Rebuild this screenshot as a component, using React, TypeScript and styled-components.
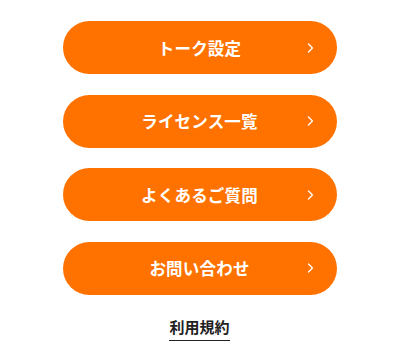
import styled, { createGlobalStyle } from "styled-components";

const GlobalStyle = createGlobalStyle`
  body {
    margin: 0;
    background: #ffffff;
    font-family: "Noto Sans CJK JP", "Noto Sans", sans-serif;
  }
`;

const Page = styled.div`
  width: 399px;
  display: flex;
  flex-direction: column;
  align-items: center;
  padding-top: 21px;
  box-sizing: border-box;
`;

const MenuList = styled.div`
  display: flex;
  flex-direction: column;
  gap: 20.5px;
`;

const MenuButton = styled.button`
  position: relative;
  width: 274px;
  height: 53px;
  border: none;
  border-radius: 27px;
  background: #ff7200;
  color: #ffffff;
  font-family: inherit;
  font-size: 16.5px;
  font-weight: 700;
  letter-spacing: 0.2px;
  display: flex;
  align-items: center;
  justify-content: center;
  cursor: pointer;
  padding: 0;
`;

const Chevron = styled.svg`
  position: absolute;
  right: 23px;
  top: 50%;
  transform: translateY(-50%);
`;

const TermsLink = styled.a`
  margin-top: 21px;
  font-size: 15px;
  font-weight: 700;
  color: #222222;
  text-decoration: none;
  padding-bottom: 2px;
  border-bottom: 1.5px solid #222222;
  line-height: 22px;
`;

const items = ["トーク設定", "ライセンス一覧", "よくあるご質問", "お問い合わせ"];

export default function App() {
  return (
    <>
      <GlobalStyle />
      <Page>
        <MenuList>
          {items.map((label) => (
            <MenuButton key={label}>
              {label}
              <Chevron width="7" height="11" viewBox="0 0 7 11">
                <path d="M1.5 1.5 L5.5 5.5 L1.5 9.5" fill="none" stroke="#ffffff" strokeWidth="1.3" strokeLinecap="round" strokeLinejoin="round" />
              </Chevron>
            </MenuButton>
          ))}
        </MenuList>
        <TermsLink href="#">利用規約</TermsLink>
      </Page>
    </>
  );
}
